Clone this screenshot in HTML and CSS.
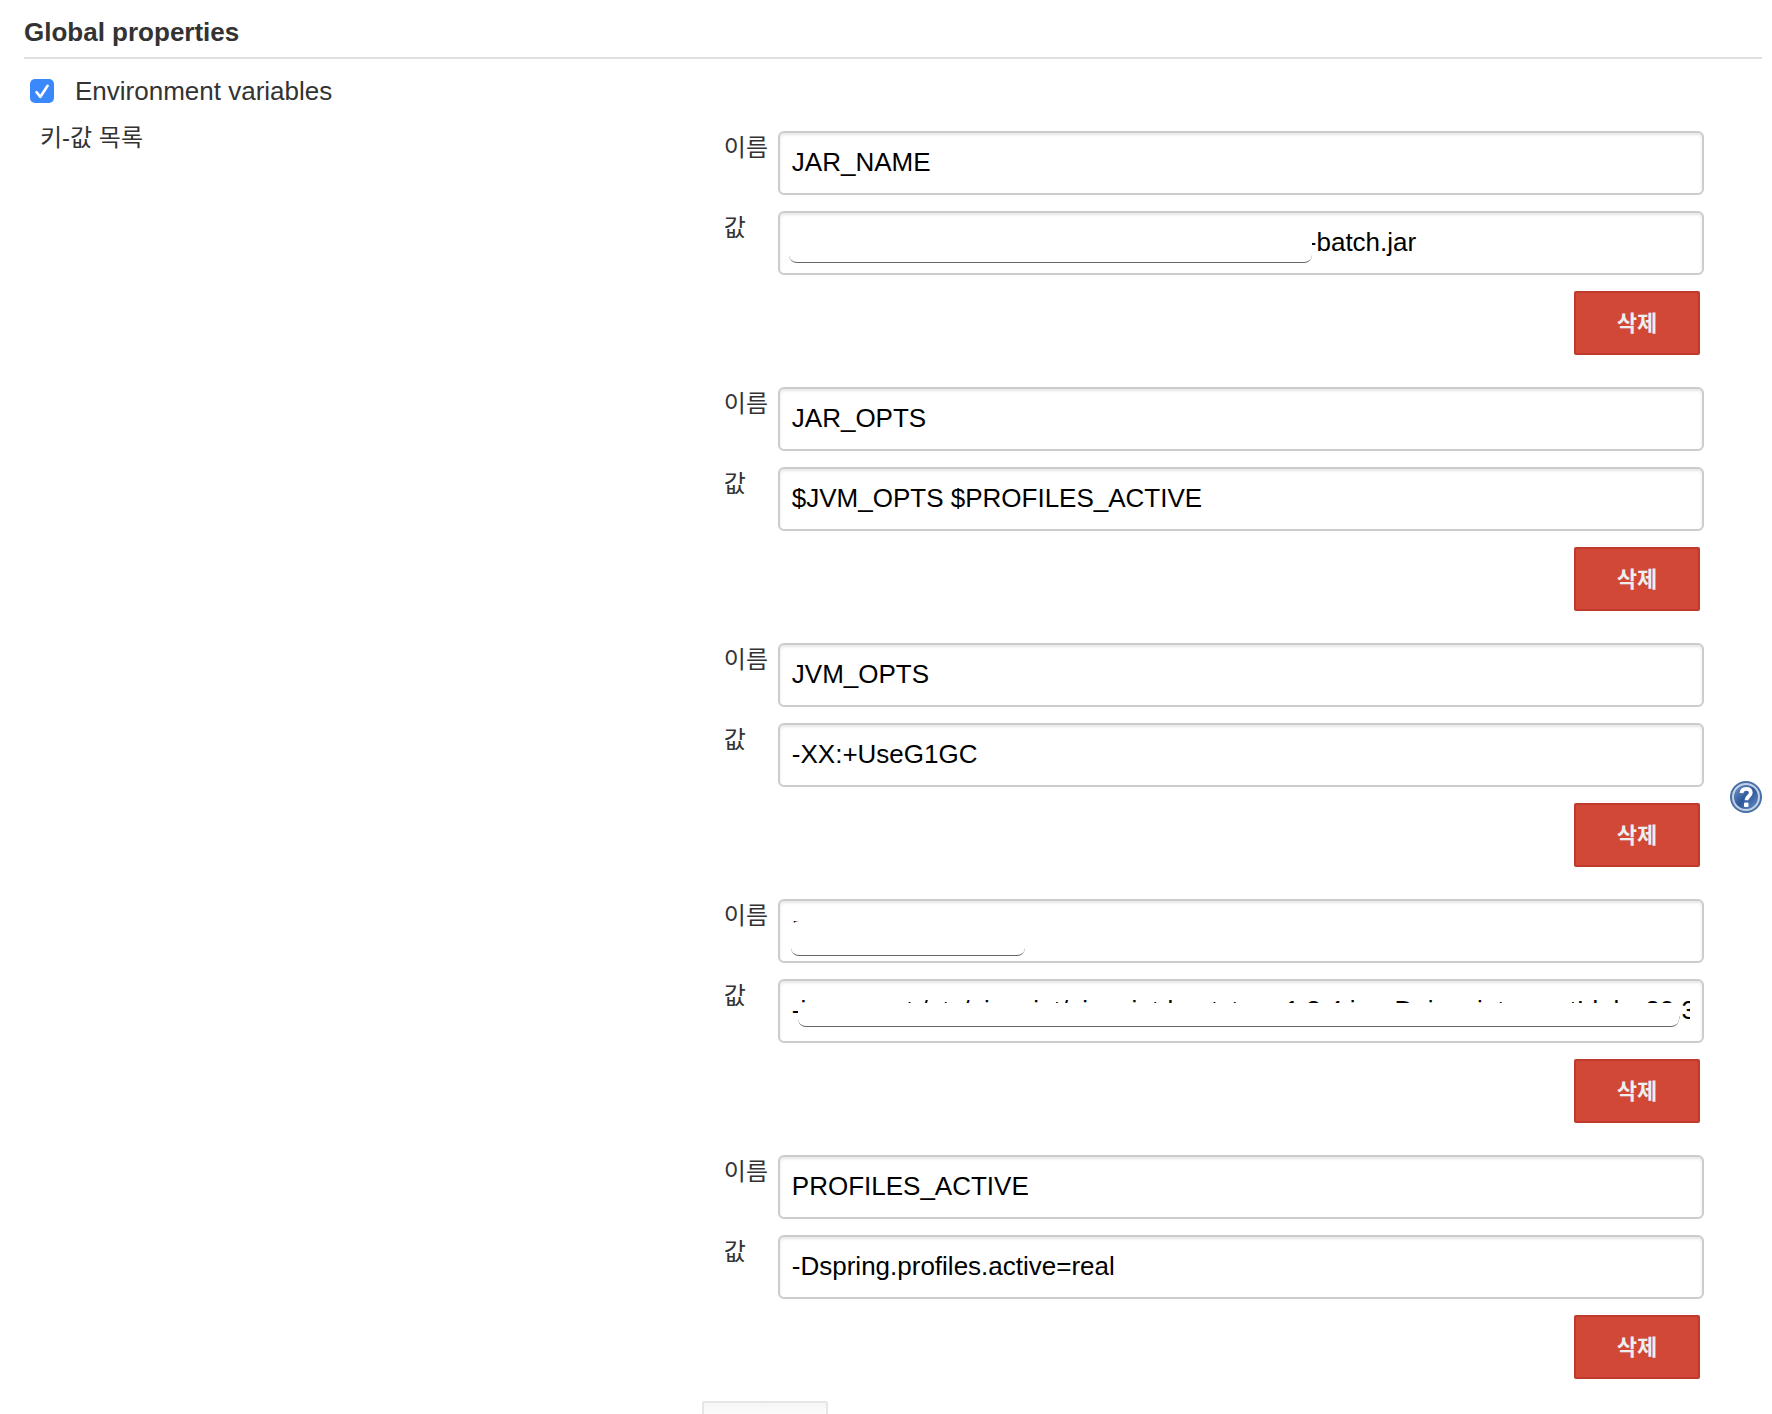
FILE: index.html
```html
<!DOCTYPE html>
<html lang="ko">
<head>
<meta charset="utf-8">
<meta name="viewport" content="width=device-width, initial-scale=1">
<title>Global properties</title>
<link rel="stylesheet" href="styles.css">
</head>
<body>
<main class="config">
  <h1 class="section-title">Global properties</h1>
  <div class="toggle-row">
    <span class="check">
      <input class="check-input" type="checkbox" id="env" checked>
      <svg class="check-mark" viewBox="0 0 24 24" aria-hidden="true"><path d="M6.500 13.200 10.400 17.800 17.600 6.800" fill="none" stroke="#fff" stroke-width="2.600" stroke-linecap="round" stroke-linejoin="round"/></svg>
    </span>
    <label class="toggle-label" for="env">Environment variables</label>
  </div>
  <form class="setting">
    <div class="setting-name">키-값 목록</div>
    <div class="setting-body">
      <div class="pair-list">
        <section class="pair">
          <div class="row"><label class="row-label" for="n1">이름</label><div class="field"><input class="text" id="n1" type="text" value="JAR_NAME"></div></div>
          <div class="row"><label class="row-label" for="v1">값</label><div class="field"><input class="text text-suffix" id="v1" type="text" value="-batch.jar"><span class="cover cover-jar"></span></div></div>
          <button class="delete" type="button">삭제</button>
        </section>
        <section class="pair">
          <div class="row"><label class="row-label" for="n2">이름</label><div class="field"><input class="text" id="n2" type="text" value="JAR_OPTS"></div></div>
          <div class="row"><label class="row-label" for="v2">값</label><div class="field"><input class="text" id="v2" type="text" value="$JVM_OPTS $PROFILES_ACTIVE"></div></div>
          <button class="delete" type="button">삭제</button>
        </section>
        <section class="pair">
          <div class="row"><label class="row-label" for="n3">이름</label><div class="field"><input class="text" id="n3" type="text" value="JVM_OPTS"></div></div>
          <div class="row"><label class="row-label" for="v3">값</label><div class="field"><input class="text" id="v3" type="text" value="-XX:+UseG1GC"></div></div>
          <button class="delete" type="button">삭제</button>
        </section>
        <section class="pair">
          <div class="row"><label class="row-label" for="n4">이름</label><div class="field"><input class="text" id="n4" type="text" value="PINPOINT_OPTS"><span class="cover cover-name"></span></div></div>
          <div class="row"><label class="row-label" for="v4">값</label><div class="field"><input class="text" id="v4" type="text" value="-javaagent:/etc/pinpoint/pinpoint-bootstrap-1.8.4.jar -Dpinpoint.agentId=br-20.3"><span class="cover cover-agent"></span></div></div>
          <button class="delete" type="button">삭제</button>
        </section>
        <section class="pair">
          <div class="row"><label class="row-label" for="n5">이름</label><div class="field"><input class="text" id="n5" type="text" value="PROFILES_ACTIVE"></div></div>
          <div class="row"><label class="row-label" for="v5">값</label><div class="field"><input class="text" id="v5" type="text" value="-Dspring.profiles.active=real"></div></div>
          <button class="delete" type="button">삭제</button>
        </section>
      </div>
      <button class="add" type="button" aria-label="추가"></button>
    </div>
    <a class="help" href="#help" aria-label="도움말">
      <svg class="help-icon" viewBox="0 0 32 32" aria-hidden="true">
        <defs><linearGradient id="blue" x1="0" y1="0" x2="1" y2="1"><stop offset="0" stop-color="#7d9cc8"/><stop offset=".5" stop-color="#2c5799"/><stop offset="1" stop-color="#6a94cb"/></linearGradient></defs>
        <circle cx="16" cy="16" r="16" fill="#4a70a5"/>
        <circle cx="16" cy="16" r="13" fill="url(#blue)" stroke="#c3d1e6" stroke-width="2"/>
        <path d="M11.500 12.200C11.700 9 13.600 7.800 16.200 7.800c2.800 0 4.600 1.500 4.600 3.900 0 3.500-4.400 3.600-4.400 7.600" fill="none" stroke="#fff" stroke-width="3.800"/>
        <rect x="14" y="21.500" width="4.500" height="4.500" rx="1" fill="#fff"/>
      </svg>
    </a>
  </form>
</main>
</body>
</html>
```
FILE: styles.css
```css
* {
  box-sizing: border-box;
}

body {
  margin: 0;
  height: 100vh;
  overflow: hidden;
  background: #fff;
  color: #333;
  font-family: "Liberation Sans", "Noto Sans CJK KR", sans-serif;
  font-size: 26px;
  line-height: 32px;
}

.config {
  padding: 16px 10px 0 24px;
}

.section-title {
  margin: 0;
  padding-bottom: 9px;
  border-bottom: 2px solid #e0e0e0;
  font-size: 26px;
  font-weight: bold;
  line-height: 32px;
}

.toggle-row {
  display: flex;
  align-items: center;
  gap: 21px;
  padding: 16px 6px 14px;
}

.check {
  position: relative;
  display: flex;
}

.check-input {
  appearance: none;
  width: 24px;
  height: 24px;
  margin: 0;
  border-radius: 5px;
  background: #3b88fd;
}

.check-mark {
  position: absolute;
  inset: 0;
  pointer-events: none;
}

.setting {
  display: grid;
  grid-template-columns: 39% minmax(0, 1fr) 58px;
}

.setting-name {
  padding-left: 16px;
  font-size: 24px;
  line-height: 34px;
}

.setting-body {
  padding: 10px 0 8px;
}

.pair-list {
  display: grid;
  gap: 32px;
  padding-left: 22px;
}

.pair {
  display: grid;
  gap: 16px;
}

.row {
  display: grid;
  grid-template-columns: 54px minmax(0, 1fr);
}

.row-label {
  font-size: 24px;
  line-height: 34px;
}

.field {
  position: relative;
  display: flex;
}

.text {
  width: 100%;
  height: 64px;
  margin: 0;
  padding: 0 12px 2px;
  border: 2px solid #ccc;
  border-radius: 6px;
  background: #fff;
  box-shadow: inset 0 2px 3px rgba(0, 0, 0, 0.1);
  color: #000;
  font: inherit;
}

.text-suffix {
  padding-left: 528px;
}

/* blank panels lying over private values */
.cover {
  position: absolute;
  border-bottom: 1px solid #666;
  border-radius: 8px;
  background: #fff;
}

.cover-jar {
  top: 18px;
  bottom: 12px;
  left: 11px;
  width: 523px;
}

.cover-name {
  top: 22px;
  bottom: 7px;
  left: 13px;
  width: 234px;
}

.cover-agent {
  top: 24px;
  right: 25px;
  bottom: 16px;
  left: 20px;
  border-radius: 0 0 8px 8px;
}

.delete {
  justify-self: end;
  width: 126px;
  height: 64px;
  margin-right: 4px;
  padding: 0 0 5px;
  border: 2px solid #c0392b;
  border-radius: 2px;
  background: #d14836;
  color: #eee;
  font-family: inherit;
  font-size: 22px;
  font-weight: bold;
}

.add {
  display: block;
  width: 126px;
  height: 64px;
  margin-top: 22px;
  border: 2px solid #e6e6e6;
  border-radius: 2px;
  background: linear-gradient(#f5f5f5, #fff 16px);
}

.help {
  display: flex;
  align-self: center;
  justify-self: end;
}

.help-icon {
  width: 32px;
  height: 32px;
}
```
